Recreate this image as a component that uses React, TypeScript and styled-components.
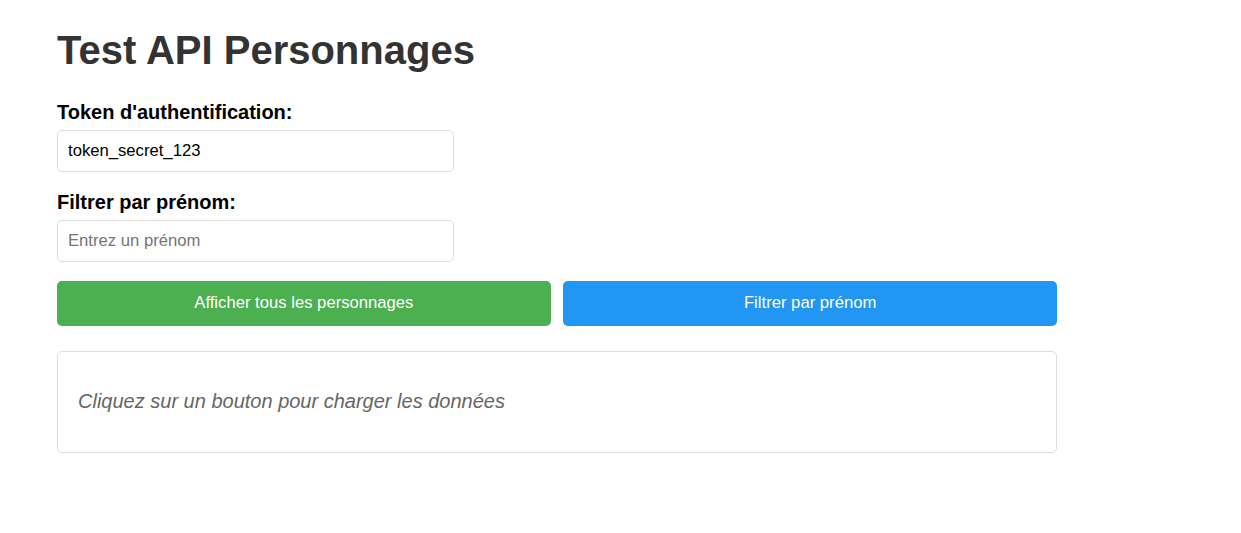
import React from "react";
import styled, { createGlobalStyle } from "styled-components";

const Global = createGlobalStyle`
  html, body { margin: 0; padding: 0; background: #fff; }
  body { font-family: "Liberation Sans", Arial, sans-serif; }
  * { box-sizing: border-box; }
`;

const Page = styled.div`
  width: 1000px;
  margin-left: 57px;
  padding-top: 27px;
`;

const Title = styled.h1`
  margin: 0 0 28px;
  font-size: 40px;
  line-height: 46px;
  font-weight: 700;
  color: #333;
`;

const Group = styled.div`
  margin-bottom: 19px;
  &:last-of-type { margin-bottom: 19.5px; }
`;

const Label = styled.label`
  display: block;
  font-size: 20px;
  line-height: 23px;
  font-weight: 700;
  color: #000;
  margin-bottom: 6.25px;
`;

const Input = styled.input`
  display: block;
  width: 397px;
  height: 41.7px;
  padding: 0 10px;
  border: 1.25px solid #ddd;
  border-radius: 5px;
  font-family: "Liberation Sans", Arial, sans-serif;
  font-size: 16.67px;
  color: #000;
  outline: none;
  &::placeholder { color: #757575; }
`;

const ButtonRow = styled.div`
  display: flex;
  gap: 12.5px;
`;

const Button = styled.button<{ $bg: string }>`
  flex: 1;
  height: 45px;
  border: none;
  border-radius: 5px;
  background: ${(p) => p.$bg};
  color: #fff;
  font-family: "Liberation Sans", Arial, sans-serif;
  font-size: 16.67px;
  cursor: pointer;
`;

const Result = styled.div`
  margin-top: 25px;
  border: 1.25px solid #ddd;
  border-radius: 5px;
  padding: 18.5px 20px 19px;
`;

const Info = styled.p`
  margin: 20px 0;
  font-size: 20px;
  line-height: 23px;
  font-style: italic;
  color: #666;
`;

export default function App() {
  return (
    <>
      <Global />
      <Page>
        <Title>Test API Personnages</Title>
        <Group>
          <Label>Token d'authentification:</Label>
          <Input defaultValue="token_secret_123" />
        </Group>
        <Group>
          <Label>Filtrer par prénom:</Label>
          <Input placeholder="Entrez un prénom" />
        </Group>
        <ButtonRow>
          <Button $bg="#4CAF50">Afficher tous les personnages</Button>
          <Button $bg="#2196F3">Filtrer par prénom</Button>
        </ButtonRow>
        <Result>
          <Info>Cliquez sur un bouton pour charger les données</Info>
        </Result>
      </Page>
    </>
  );
}
